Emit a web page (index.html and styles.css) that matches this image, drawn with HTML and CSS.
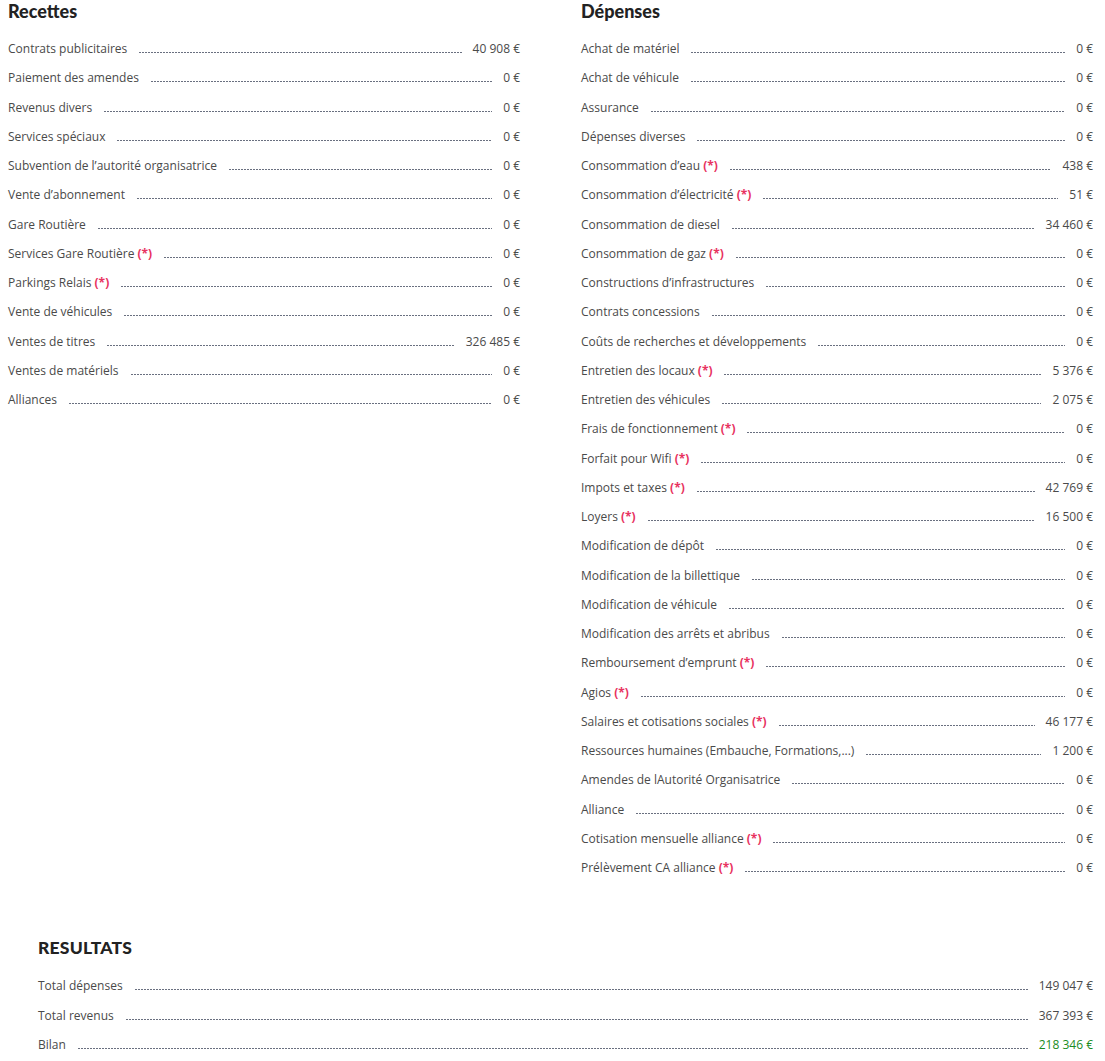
FILE: index.html
```html
<!DOCTYPE html>
<html lang="fr">
<head>
<meta charset="utf-8">
<title>Bilan</title>
<link rel="stylesheet" href="styles.css">
</head>
<body>
<div class="page">
  <div class="columns">
    <section class="section">
      <h2 class="title">Recettes</h2>
      <ul class="list">
        <li class="row"><span class="label">Contrats publicitaires</span><span class="leader"></span><span class="value">40 908 €</span></li>
        <li class="row"><span class="label">Paiement des amendes</span><span class="leader"></span><span class="value">0 €</span></li>
        <li class="row"><span class="label">Revenus divers</span><span class="leader"></span><span class="value">0 €</span></li>
        <li class="row"><span class="label">Services spéciaux</span><span class="leader"></span><span class="value">0 €</span></li>
        <li class="row"><span class="label">Subvention de l’autorité organisatrice</span><span class="leader"></span><span class="value">0 €</span></li>
        <li class="row"><span class="label">Vente d’abonnement</span><span class="leader"></span><span class="value">0 €</span></li>
        <li class="row"><span class="label">Gare Routière</span><span class="leader"></span><span class="value">0 €</span></li>
        <li class="row"><span class="label">Services Gare Routière <span class="star">(*)</span></span><span class="leader"></span><span class="value">0 €</span></li>
        <li class="row"><span class="label">Parkings Relais <span class="star">(*)</span></span><span class="leader"></span><span class="value">0 €</span></li>
        <li class="row"><span class="label">Vente de véhicules</span><span class="leader"></span><span class="value">0 €</span></li>
        <li class="row"><span class="label">Ventes de titres</span><span class="leader"></span><span class="value">326 485 €</span></li>
        <li class="row"><span class="label">Ventes de matériels</span><span class="leader"></span><span class="value">0 €</span></li>
        <li class="row"><span class="label">Alliances</span><span class="leader"></span><span class="value">0 €</span></li>
      </ul>
    </section>
    <section class="section">
      <h2 class="title">Dépenses</h2>
      <ul class="list">
        <li class="row"><span class="label">Achat de matériel</span><span class="leader"></span><span class="value">0 €</span></li>
        <li class="row"><span class="label">Achat de véhicule</span><span class="leader"></span><span class="value">0 €</span></li>
        <li class="row"><span class="label">Assurance</span><span class="leader"></span><span class="value">0 €</span></li>
        <li class="row"><span class="label">Dépenses diverses</span><span class="leader"></span><span class="value">0 €</span></li>
        <li class="row"><span class="label">Consommation d’eau <span class="star">(*)</span></span><span class="leader"></span><span class="value">438 €</span></li>
        <li class="row"><span class="label">Consommation d’électricité <span class="star">(*)</span></span><span class="leader"></span><span class="value">51 €</span></li>
        <li class="row"><span class="label">Consommation de diesel</span><span class="leader"></span><span class="value">34 460 €</span></li>
        <li class="row"><span class="label">Consommation de gaz <span class="star">(*)</span></span><span class="leader"></span><span class="value">0 €</span></li>
        <li class="row"><span class="label">Constructions d’infrastructures</span><span class="leader"></span><span class="value">0 €</span></li>
        <li class="row"><span class="label">Contrats concessions</span><span class="leader"></span><span class="value">0 €</span></li>
        <li class="row"><span class="label">Coûts de recherches et développements</span><span class="leader"></span><span class="value">0 €</span></li>
        <li class="row"><span class="label">Entretien des locaux <span class="star">(*)</span></span><span class="leader"></span><span class="value">5 376 €</span></li>
        <li class="row"><span class="label">Entretien des véhicules</span><span class="leader"></span><span class="value">2 075 €</span></li>
        <li class="row"><span class="label">Frais de fonctionnement <span class="star">(*)</span></span><span class="leader"></span><span class="value">0 €</span></li>
        <li class="row"><span class="label">Forfait pour Wifi <span class="star">(*)</span></span><span class="leader"></span><span class="value">0 €</span></li>
        <li class="row"><span class="label">Impots et taxes <span class="star">(*)</span></span><span class="leader"></span><span class="value">42 769 €</span></li>
        <li class="row"><span class="label">Loyers <span class="star">(*)</span></span><span class="leader"></span><span class="value">16 500 €</span></li>
        <li class="row"><span class="label">Modification de dépôt</span><span class="leader"></span><span class="value">0 €</span></li>
        <li class="row"><span class="label">Modification de la billettique</span><span class="leader"></span><span class="value">0 €</span></li>
        <li class="row"><span class="label">Modification de véhicule</span><span class="leader"></span><span class="value">0 €</span></li>
        <li class="row"><span class="label">Modification des arrêts et abribus</span><span class="leader"></span><span class="value">0 €</span></li>
        <li class="row"><span class="label">Remboursement d’emprunt <span class="star">(*)</span></span><span class="leader"></span><span class="value">0 €</span></li>
        <li class="row"><span class="label">Agios <span class="star">(*)</span></span><span class="leader"></span><span class="value">0 €</span></li>
        <li class="row"><span class="label">Salaires et cotisations sociales <span class="star">(*)</span></span><span class="leader"></span><span class="value">46 177 €</span></li>
        <li class="row"><span class="label">Ressources humaines (Embauche, Formations,...)</span><span class="leader"></span><span class="value">1 200 €</span></li>
        <li class="row"><span class="label">Amendes de lAutorité Organisatrice</span><span class="leader"></span><span class="value">0 €</span></li>
        <li class="row"><span class="label">Alliance</span><span class="leader"></span><span class="value">0 €</span></li>
        <li class="row"><span class="label">Cotisation mensuelle alliance <span class="star">(*)</span></span><span class="leader"></span><span class="value">0 €</span></li>
        <li class="row"><span class="label">Prélèvement CA alliance <span class="star">(*)</span></span><span class="leader"></span><span class="value">0 €</span></li>
      </ul>
    </section>
  </div>
  <section class="results">
    <h2 class="title title-upper">RESULTATS</h2>
    <ul class="list">
      <li class="row"><span class="label">Total dépenses</span><span class="leader"></span><span class="value">149 047 €</span></li>
      <li class="row"><span class="label">Total revenus</span><span class="leader"></span><span class="value">367 393 €</span></li>
      <li class="row"><span class="label">Bilan</span><span class="leader"></span><span class="value value-positive">218 346 €</span></li>
    </ul>
  </section>
</div>
</body>
</html>
```

FILE: styles.css
```css
html, body {
  margin: 0;
  padding: 0;
  background: #ffffff;
}

body {
  font-family: "Open Sans", "Liberation Sans", sans-serif;
  font-size: 12px;
  color: #4a4a4a;
}

.page {
  padding: 0 12px 0 8px;
}

.columns {
  display: grid;
  grid-template-columns: 512px 512px;
  column-gap: 61px;
}

.title {
  margin: 0;
  font-family: "Lato", "Liberation Sans", sans-serif;
  font-weight: 900;
  font-size: 18px;
  line-height: 22px;
  color: #222222;
}

.list {
  list-style: none;
  margin: 12px 0 0 0;
  padding: 0;
}

.row {
  display: flex;
  align-items: baseline;
  height: 29.25px;
  line-height: 29.25px;
  white-space: nowrap;
}

.leader {
  flex: 1;
  height: 1px;
  margin: 0 11px 0 12px;
  background-image: linear-gradient(to right, #6a7080 0, #6a7080 2px, transparent 2px);
  background-size: 3px 1px;
  background-repeat: repeat-x;
}

.star {
  color: #e8335f;
  font-weight: 700;
}

.results {
  padding-left: 30px;
  margin-top: 55px;
}

.title-upper {
  font-size: 17.5px;
  letter-spacing: 0.2px;
}

.value-positive {
  color: #1a8c1e;
}
```
